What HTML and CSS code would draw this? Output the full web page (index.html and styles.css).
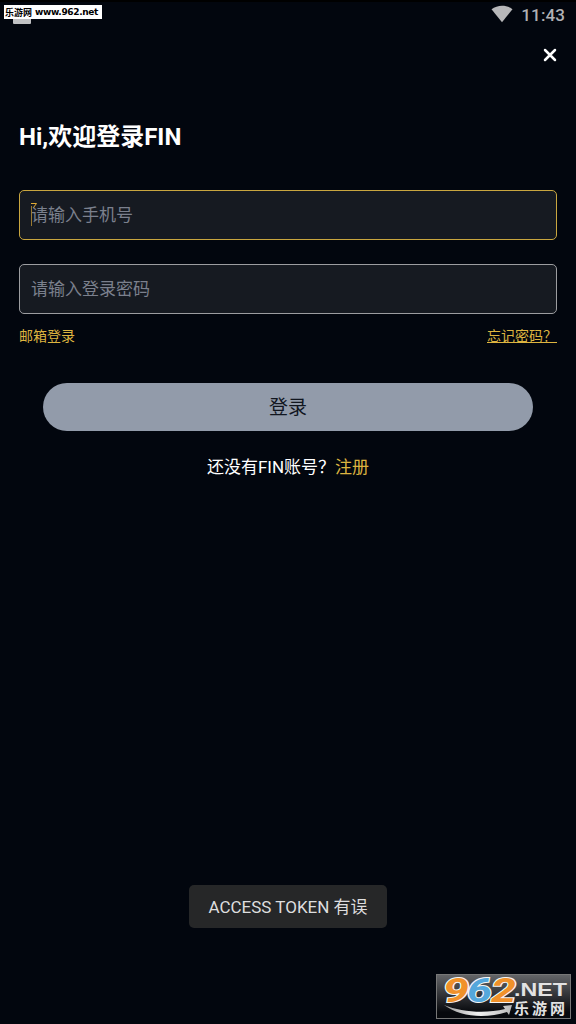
FILE: index.html
```html
<!DOCTYPE html>
<html lang="zh-CN">
<head>
  <meta charset="UTF-8">
  <title>FIN 登录</title>
  <meta name="viewport" content="width=device-width, initial-scale=1">
  <link rel="stylesheet" href="styles.css">
</head>
<body>
  <div class="app">
    <header class="status-bar">
      <svg class="wifi" width="22" height="18" viewBox="0 0 22 18">
        <path d="M.5 4.2C6.5-.5 15.5-.5 21.5 4.2L11 17.2Z" fill="#b7b7b9"/>
      </svg>
      <span class="clock">11:43</span>
      <span class="notification"></span>
      <span class="site-tag"><span class="site-name">乐游网</span><span class="site-url">www.962.net</span></span>
    </header>

    <div class="nav">
      <button class="close" type="button" aria-label="关闭">
        <svg width="14" height="14" viewBox="0 0 14 14">
          <path d="M2 2L12 12M12 2L2 12" stroke="#fff" stroke-width="2.5" stroke-linecap="round"/>
        </svg>
      </button>
    </div>

    <main class="login">
      <h1>Hi,欢迎登录FIN</h1>
      <form class="login-form">
        <div class="field focused">
          <input type="text" placeholder="请输入手机号">
          <svg class="caret" width="8" height="24" viewBox="0 0 8 24">
            <path d="M.5 3V23" stroke="#9a7a30" fill="none"/>
            <path d="M0 .5H5.500L2.500 4.500" stroke="#e0ab36" fill="none"/>
          </svg>
        </div>
        <div class="field">
          <input type="password" placeholder="请输入登录密码">
        </div>
        <div class="links">
          <a>邮箱登录</a>
          <a class="forgot">忘记密码？</a>
        </div>
        <button class="submit" type="button">登录</button>
      </form>
      <p class="register">还没有FIN账号？<a>注册</a></p>
    </main>

    <div class="toast">ACCESS TOKEN 有误</div>

    <div class="watermark">
      <svg width="135" height="45" viewBox="0 0 135 45">
        <defs>
          <linearGradient id="swoosh" x1="0" y1="0" x2="1" y2="0">
            <stop offset="0" stop-color="#999"/>
            <stop offset=".5" stop-color="#f2f2f2"/>
            <stop offset="1" stop-color="#bbb"/>
          </linearGradient>
        </defs>
        <path d="M8 31C25 38 49 40 69 35L67 32L76 31L73 41L71 38C49 45 24 43 8 31Z" fill="url(#swoosh)"/>
        <g class="mark-digits">
          <text x="7" y="27.500" textLength="26" lengthAdjust="spacingAndGlyphs" fill="#f0912a">9</text>
          <text x="31" y="27.500" textLength="25" lengthAdjust="spacingAndGlyphs" fill="#54a7dc">6</text>
          <text x="55" y="27.500" textLength="25" lengthAdjust="spacingAndGlyphs" fill="#f0912a">2</text>
        </g>
        <text class="mark-net" x="78" y="21.500" textLength="53" lengthAdjust="spacingAndGlyphs">.NET</text>
        <text class="mark-name" x="78" y="39.500" textLength="51">乐游网</text>
      </svg>
    </div>
  </div>
</body>
</html>
```
FILE: styles.css
```css
* {
  box-sizing: border-box;
}
body {
  margin: 0;
  background: #02060e;
  color: #fff;
  font-family: Roboto, "Noto Sans CJK SC", sans-serif;
}
.app {
  position: relative;
  display: flex;
  flex-direction: column;
  height: 1024px;
  overflow: hidden;
}
.status-bar {
  position: relative;
  display: flex;
  justify-content: flex-end;
  align-items: center;
  gap: 8px;
  height: 30px;
  padding-right: 11px;
  border-top: 2px solid #000;
}
.wifi {
  margin-top: -4px;
}
.clock {
  margin-top: -2px;
  font-size: 17px;
  font-weight: 500;
  line-height: 20px;
  letter-spacing: 0.1px;
  color: #b0b1b4;
}
.notification {
  position: absolute;
  left: 13px;
  top: 12px;
  width: 18px;
  height: 10px;
  border-radius: 1px;
  background: #c0c1c3;
}
.site-tag {
  position: absolute;
  left: 4px;
  top: 3px;
  display: flex;
  align-items: center;
  gap: 3px;
  width: 98px;
  height: 14px;
  padding-left: 1px;
  background: #fff;
  color: #000;
  font-weight: 700;
  white-space: nowrap;
}
.site-name {
  font-family: "Noto Sans CJK SC", sans-serif;
  font-size: 9px;
}
.site-url {
  font-family: "DejaVu Sans", sans-serif;
  font-size: 9px;
  letter-spacing: -0.35px;
}
.nav {
  display: flex;
  justify-content: flex-end;
  align-items: center;
  height: 50px;
  padding-right: 19px;
}
.close {
  display: flex;
  padding: 0;
  border: none;
  background: none;
}
.login {
  padding: 39px 19px 0;
}
h1 {
  margin: 0 0 35px;
  font-size: 24px;
  font-weight: 700;
  line-height: 36px;
}
.field {
  position: relative;
  height: 50px;
  margin-bottom: 24px;
  border: 1px solid #9c9da0;
  border-radius: 5px;
  background: #161a21;
}
.field.focused {
  border-color: #c9a63f;
}
.field input {
  width: 100%;
  height: 48px;
  padding: 0 11px;
  border: none;
  outline: none;
  background: none;
  color: #fff;
  font-family: inherit;
  font-size: 17px;
}
.field input::placeholder {
  color: #7b808d;
}
.caret {
  position: absolute;
  left: 11px;
  top: 12px;
}
.links {
  display: flex;
  justify-content: space-between;
  margin-top: -12px;
  font-size: 14px;
  line-height: 20px;
}
a {
  color: #ddb440;
}
.forgot {
  text-decoration: underline;
}
.submit {
  display: block;
  width: 490px;
  height: 48px;
  margin: 37px auto 0;
  padding: 0 0 3px;
  border: none;
  border-radius: 24px;
  background: #929baa;
  color: #11161f;
  font-family: inherit;
  font-size: 19px;
}
.register {
  margin: 24px 0 0;
  font-size: 17px;
  line-height: 24px;
  text-align: center;
}
.toast {
  position: absolute;
  left: 189px;
  top: 885px;
  width: 198px;
  height: 43px;
  border-radius: 5px;
  background: #262728;
  color: #dededf;
  font-size: 17px;
  line-height: 45px;
  text-align: center;
}
.watermark {
  position: absolute;
  right: 5px;
  bottom: 5px;
  width: 135px;
  height: 45px;
  background: linear-gradient(#66676a, #07090d 85%);
  box-shadow: inset 0 0 0 1px #777;
}
.watermark svg {
  display: block;
  overflow: visible;
}
.mark-digits {
  font-family: Roboto, sans-serif;
  font-size: 33px;
  font-weight: 700;
  font-style: italic;
  stroke: #f5f5f5;
  stroke-width: 2px;
  paint-order: stroke;
}
.mark-net {
  font-family: "Liberation Sans", sans-serif;
  font-size: 18px;
  font-weight: 700;
  fill: #e3e3e3;
}
.mark-name {
  font-family: "Noto Sans CJK SC", sans-serif;
  font-size: 15px;
  font-weight: 700;
  fill: #e3e3e3;
}
```
